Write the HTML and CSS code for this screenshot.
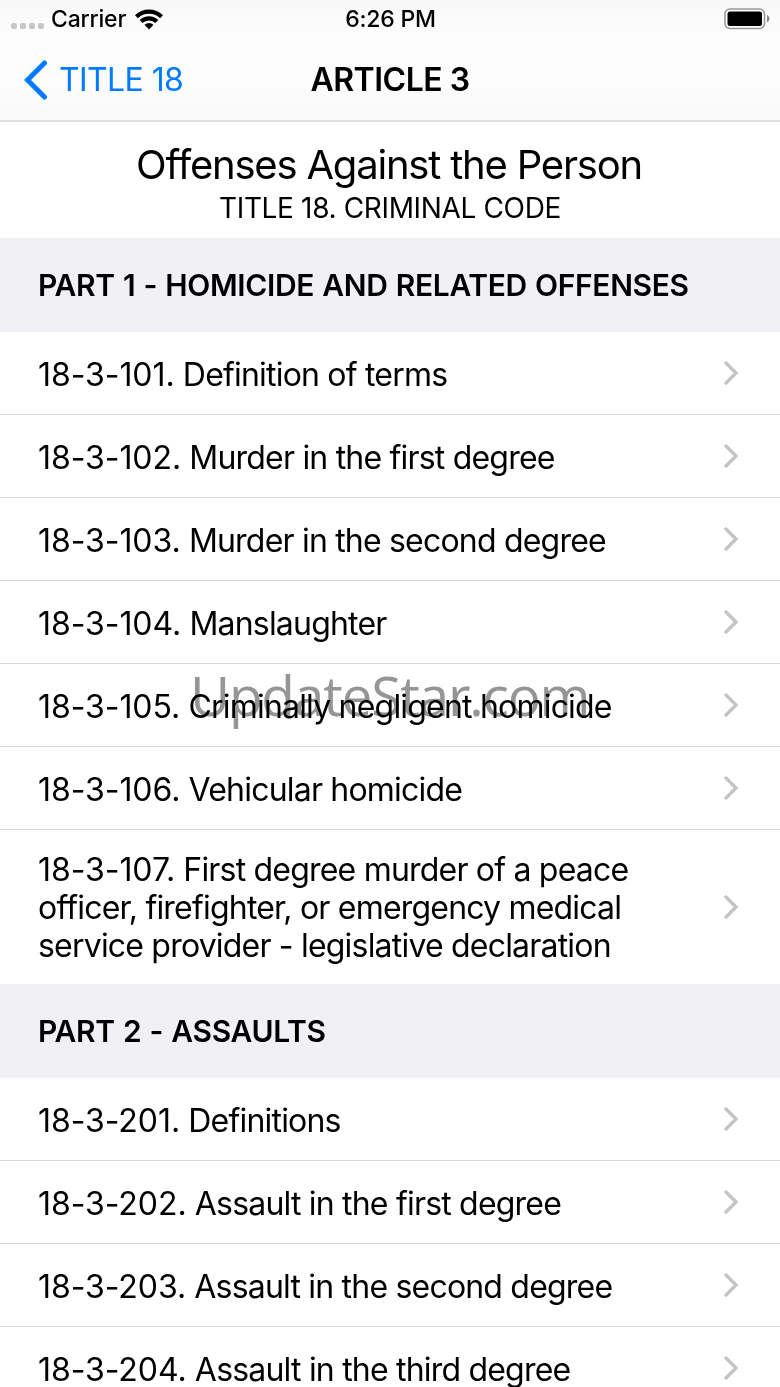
FILE: index.html
```html
<!DOCTYPE html>
<html lang="en">
<head>
  <meta charset="UTF-8">
  <title>Article 3</title>
  <link rel="stylesheet" href="styles.css">
</head>
<body>

  <header class="top">
    <div class="status">
      <div class="carrier">
        <span class="dots"><i></i><i></i><i></i><i></i></span>
        <span class="carrier-name">Carrier</span>
        <svg class="wifi" width="28" height="21" viewBox="0 0 28 21">
          <path d="M0 6.2A20 20 0 0 1 28 6.2L25.1 9.2A16 16 0 0 0 2.9 9.2Z"/>
          <path d="M4.7 11A13.2 13.2 0 0 1 23.3 11L20.4 14A9.2 9.2 0 0 0 7.6 14Z"/>
          <path d="M9.5 15.8A6.4 6.4 0 0 1 18.5 15.8L14 20.5Z"/>
        </svg>
      </div>
      <span class="time">6:26 PM</span>
      <svg class="battery" width="46" height="22" viewBox="0 0 46 22">
        <rect x="1" y="1" width="39.5" height="19.5" rx="5" fill="#fff" stroke="#999" stroke-width="1.6"/>
        <rect x="3.5" y="3.5" width="34.5" height="14.5" rx="2.5"/>
        <path d="M43 7Q45.5 8 45.5 10.7Q45.5 13.5 43 14.5Z" fill="#888"/>
      </svg>
    </div>
    <nav class="nav">
      <a class="back">
        <svg width="24" height="40" viewBox="0 0 24 40">
          <path d="M20.5 3L3.5 20L20.5 37" fill="none" stroke="#007aff" stroke-width="5" stroke-linecap="round"/>
        </svg>
        <span>TITLE 18</span>
      </a>
      <h1>ARTICLE 3</h1>
    </nav>
  </header>

  <div class="intro">
    <h2>Offenses Against the Person</h2>
    <p>TITLE 18. CRIMINAL CODE</p>
  </div>

  <h3 class="part">PART 1 - HOMICIDE AND RELATED OFFENSES</h3>
  <ul class="list">
    <li><span><b>18-3-101.</b> Definition of terms</span><svg class="chevron" viewBox="0 0 16 24"><path d="M2 2L12 12L2 22"/></svg></li>
    <li><span><b>18-3-102.</b> Murder in the first degree</span><svg class="chevron" viewBox="0 0 16 24"><path d="M2 2L12 12L2 22"/></svg></li>
    <li><span><b>18-3-103.</b> Murder in the second degree</span><svg class="chevron" viewBox="0 0 16 24"><path d="M2 2L12 12L2 22"/></svg></li>
    <li><span><b>18-3-104.</b> Manslaughter</span><svg class="chevron" viewBox="0 0 16 24"><path d="M2 2L12 12L2 22"/></svg></li>
    <li><span><b>18-3-105.</b> Criminally negligent homicide</span><svg class="chevron" viewBox="0 0 16 24"><path d="M2 2L12 12L2 22"/></svg></li>
    <li><span><b>18-3-106.</b> Vehicular homicide</span><svg class="chevron" viewBox="0 0 16 24"><path d="M2 2L12 12L2 22"/></svg></li>
    <li class="tall"><span><b>18-3-107.</b> First degree murder of a peace<br>officer, firefighter, or emergency medical<br>service provider - legislative declaration</span><svg class="chevron" viewBox="0 0 16 24"><path d="M2 2L12 12L2 22"/></svg></li>
  </ul>

  <h3 class="part">PART 2 - ASSAULTS</h3>
  <ul class="list">
    <li><span><b>18-3-201.</b> Definitions</span><svg class="chevron" viewBox="0 0 16 24"><path d="M2 2L12 12L2 22"/></svg></li>
    <li><span><b>18-3-202.</b> Assault in the first degree</span><svg class="chevron" viewBox="0 0 16 24"><path d="M2 2L12 12L2 22"/></svg></li>
    <li><span><b>18-3-203.</b> Assault in the second degree</span><svg class="chevron" viewBox="0 0 16 24"><path d="M2 2L12 12L2 22"/></svg></li>
    <li><span><b>18-3-204.</b> Assault in the third degree</span><svg class="chevron" viewBox="0 0 16 24"><path d="M2 2L12 12L2 22"/></svg></li>
  </ul>

  <div class="watermark">UpdateStar.com</div>

</body>
</html>
```
FILE: styles.css
```css
* {
  box-sizing: border-box;
}

body {
  position: relative;
  width: 780px;
  height: 1387px;
  margin: 0;
  overflow: hidden;
  background: #fff;
  color: #000;
  font-family: Inter, "Liberation Sans", sans-serif;
}

h1, h2, h3, p, ul {
  margin: 0;
  padding: 0;
}

.top {
  height: 122px;
  background: linear-gradient(#f8f8f8, #fcfcfc 25%, #fcfcfc 70%, #f9f9f9);
  border-bottom: 2px solid #dedede;
}

.status {
  display: grid;
  grid-template-columns: 1fr auto 1fr;
  align-items: center;
  height: 38px;
  padding: 0 10px 0 11px;
}

.carrier {
  display: flex;
  align-items: center;
}

.carrier-name, .time {
  font-size: 23px;
  line-height: 38px;
  font-weight: 450;
  letter-spacing: -0.2px;
}

.dots {
  display: flex;
  gap: 3px;
  width: 40px;
  padding-top: 13px;
}

.dots i {
  width: 6px;
  height: 6px;
  border-radius: 2px;
  background: #c7c7c7;
}

.wifi {
  margin-left: 9px;
}

.battery {
  justify-self: end;
  margin-bottom: 1px;
}

.nav {
  display: grid;
  grid-template-columns: 1fr auto 1fr;
  align-items: center;
  height: 83px;
  padding: 0 24px;
}

.back {
  display: flex;
  align-items: center;
  gap: 11px;
  color: #007aff;
  font-size: 32px;
  letter-spacing: -0.6px;
}

.nav h1 {
  font-size: 32px;
  font-weight: 600;
  letter-spacing: -0.5px;
}

.intro {
  height: 116px;
  padding-top: 18px;
  text-align: center;
}

.intro h2 {
  padding-right: 2px;
  font-size: 40px;
  line-height: 50px;
  font-weight: 400;
  letter-spacing: -1.2px;
}

.intro p {
  font-size: 28px;
  line-height: 37px;
  letter-spacing: -0.35px;
}

.part {
  height: 94px;
  padding-left: 38px;
  background: #f1f0f5;
  font-size: 30px;
  line-height: 95px;
  font-weight: 600;
  letter-spacing: -0.35px;
  word-spacing: 1px;
}

.list {
  list-style: none;
}

.list li {
  display: flex;
  align-items: center;
  justify-content: space-between;
  height: 83px;
  padding: 4px 40px 0 38px;
  border-bottom: 1px solid #d9d9db;
  font-size: 32px;
  line-height: 38px;
  letter-spacing: -0.8px;
  white-space: nowrap;
}

/* section numbers are set a bit wider than the titles */
.list b {
  font-weight: 400;
  letter-spacing: -0.05px;
}

.list .tall {
  height: 154px;
  padding-top: 2px;
  border-bottom: none;
}

.chevron {
  width: 16px;
  height: 24px;
  margin-bottom: 4px;
  fill: none;
  stroke: #c4c4c6;
  stroke-width: 3.4;
  stroke-linecap: round;
}

.tall .chevron {
  margin-bottom: 2px;
}

/* stamped across the middle of the page */
.watermark {
  position: absolute;
  top: 655px;
  left: 190px;
  color: #959595;
  font: 55px/80px "Open Sans", sans-serif;
  letter-spacing: -1.2px;
  white-space: nowrap;
  mix-blend-mode: multiply;
}
```
